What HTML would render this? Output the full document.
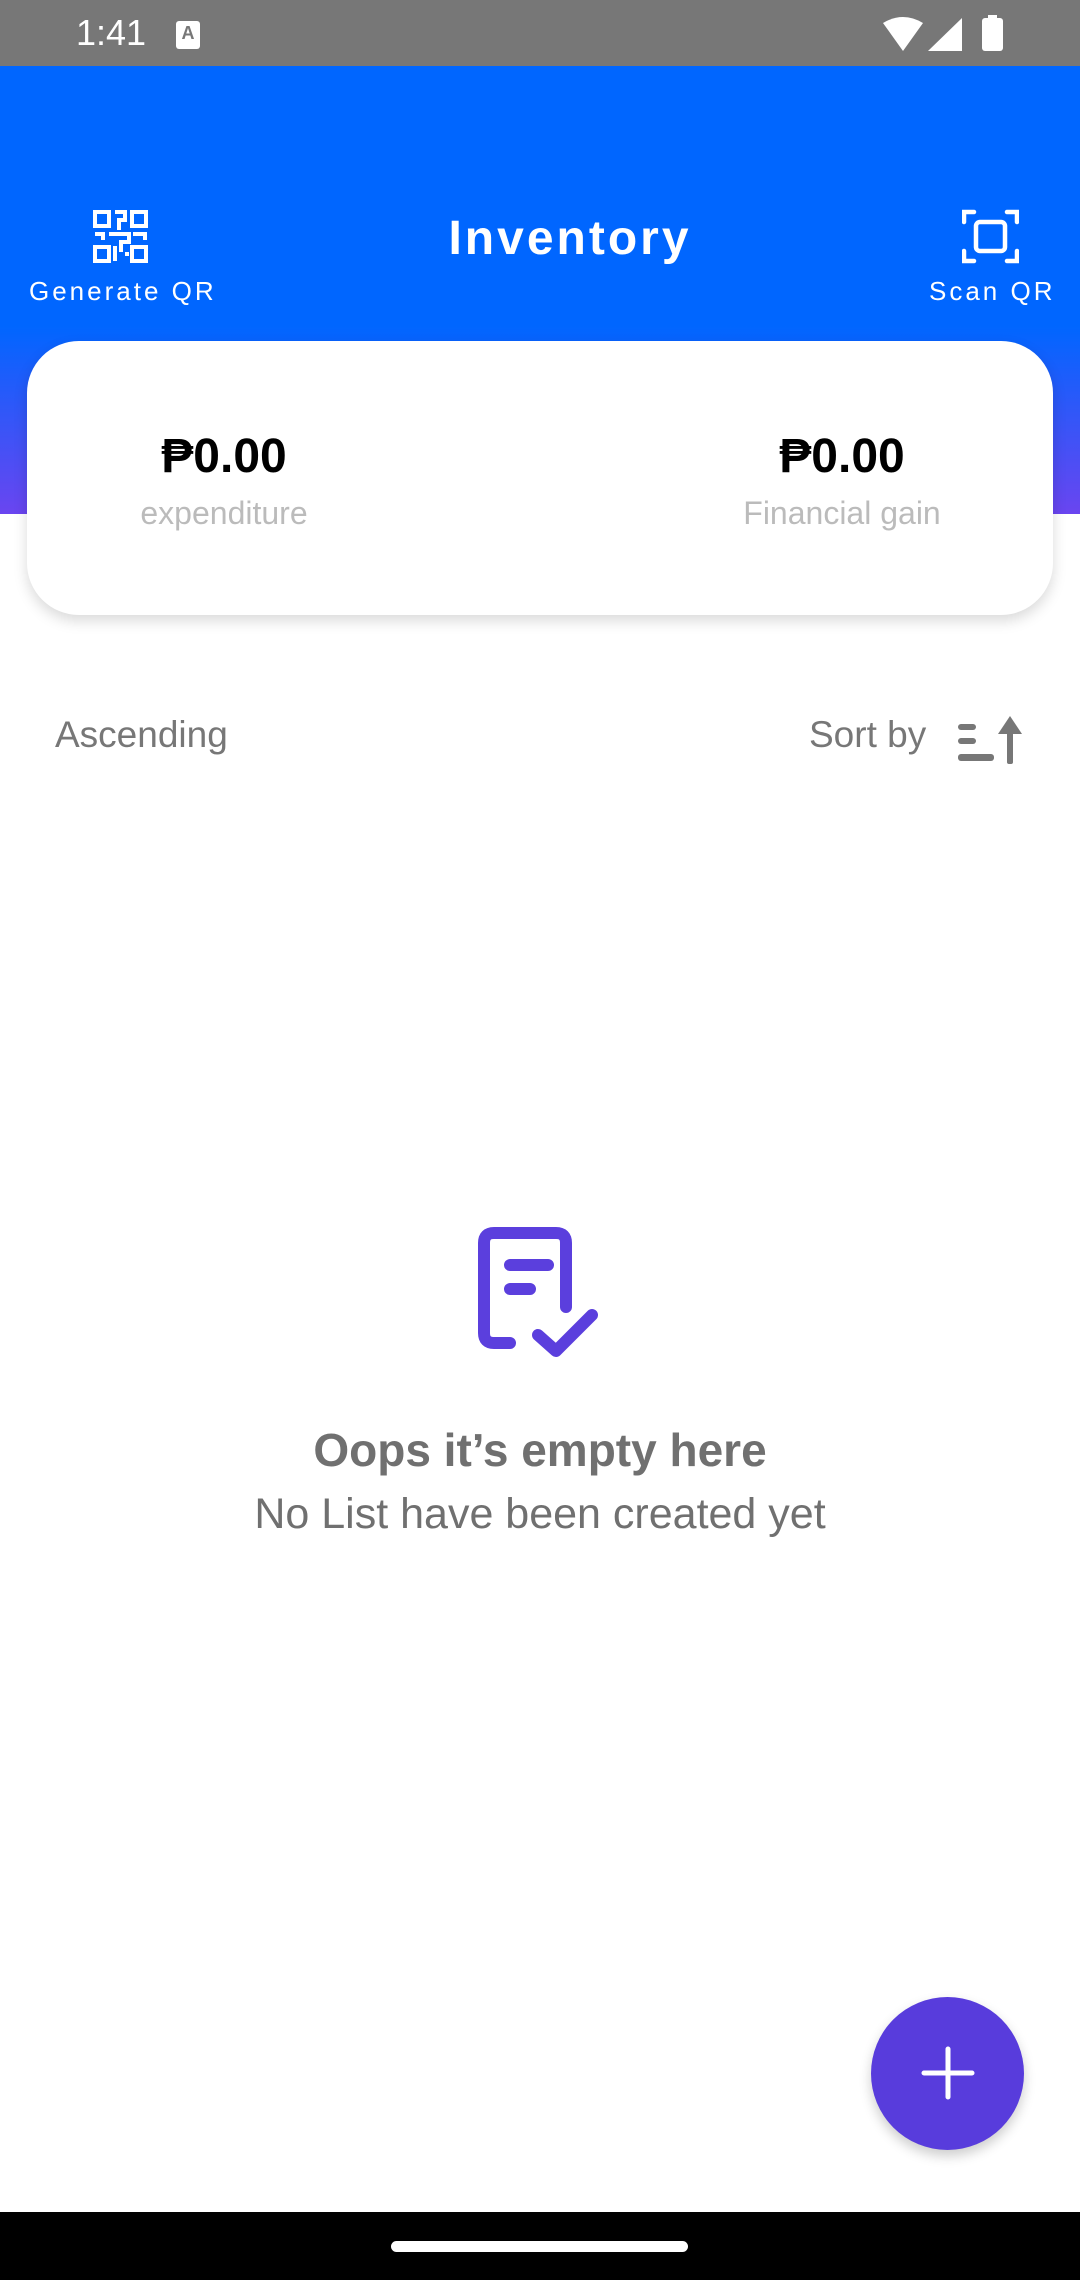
<!DOCTYPE html>
<html><head><meta charset="utf-8"><style>
*{margin:0;padding:0;box-sizing:border-box}
html,body{width:1080px;height:2280px;overflow:hidden;background:#fff;font-family:"Liberation Sans",sans-serif;position:relative}
.abs{position:absolute}
#status{left:0;top:0;width:1080px;height:66px;background:#777}
#head{left:0;top:66px;width:1080px;height:448px;background:linear-gradient(180deg,#0066ff 0%,#0066ff 58%,#6a45f0 100%)}
.lbl{color:#fff;font-size:26px;letter-spacing:3px;white-space:nowrap}
#card{left:27px;top:341px;width:1026px;height:274px;background:#fff;border-radius:52px;box-shadow:0 6px 14px rgba(0,0,0,.15)}
.amt{font-weight:bold;font-size:48px;color:#000;width:400px;text-align:center}
.sub{font-size:32px;color:#bbb;width:400px;text-align:center}
</style></head><body>
<div id="status" class="abs"></div>
<div class="abs" style="left:76px;top:12px;color:#fff;font-size:36px">1:41</div>
<div class="abs" style="left:176px;top:21px;width:24px;height:28px;background:#fff;border-radius:3px;color:#777;font-size:18px;font-weight:bold;text-align:center;line-height:24px">A</div>
<svg class="abs" style="left:880px;top:14px" width="130" height="40" viewBox="0 0 130 40">
<path d="M3 9 Q23 -3 43 9 L23 37 Z" fill="#fff"/>
<path d="M48 37 L82 4 L82 37 Z" fill="#fff"/>
<rect x="102" y="4" width="21" height="33" rx="3" fill="#fff"/><rect x="108" y="1" width="9" height="4" fill="#fff"/>
</svg>
<div id="head" class="abs"></div>
<svg class="abs" style="left:93px;top:210px" width="55" height="53" viewBox="0 0 55 53" fill="none" stroke="#fff" stroke-width="4">
<rect x="2" y="2" width="14" height="14"/><rect x="39" y="2" width="14" height="14"/><rect x="2" y="37" width="14" height="14"/><rect x="39" y="37" width="14" height="14"/>
<path d="M22 2h10v8h-6v10M2 24h8v6M16 24h20v8h-8v10M40 24h12v6M22 36v15M32 44h4"/>
</svg>
<div class="abs lbl" style="left:29px;top:276px">Generate QR</div>
<div class="abs" style="left:330px;top:211px;width:480px;text-align:center;color:#fff;font-weight:bold;font-size:48px;letter-spacing:3px">Inventory</div>
<svg class="abs" style="left:962px;top:208px" width="57" height="57" viewBox="0 0 57 57" fill="none" stroke="#fff" stroke-width="4.5" stroke-linecap="round">
<path d="M2 14V4h10M45 4h10v10M55 43v10H45M12 53H2V43"/>
<rect x="14" y="14" width="29" height="29" rx="4"/>
</svg>
<div class="abs lbl" style="left:929px;top:276px">Scan QR</div>
<div id="card" class="abs"></div>
<div class="abs amt" style="left:24px;top:429px">₱0.00</div>
<div class="abs sub" style="left:24px;top:495px">expenditure</div>
<div class="abs amt" style="left:642px;top:429px">₱0.00</div>
<div class="abs sub" style="left:642px;top:495px">Financial gain</div>
<div class="abs" style="left:55px;top:714px;font-size:37px;color:#777">Ascending</div>
<div class="abs" style="left:809px;top:714px;font-size:37px;color:#777">Sort by</div>
<svg class="abs" style="left:956px;top:716px" width="72" height="50" viewBox="0 0 72 50" fill="#777">
<rect x="2" y="8" width="18" height="6" rx="3"/><rect x="2" y="22" width="18" height="6" rx="3"/><rect x="2" y="38" width="36" height="7" rx="3"/>
<rect x="51" y="10" width="6" height="38" rx="2"/><path d="M54 0 L66 18 L42 18 Z"/>
</svg>
<svg class="abs" style="left:476px;top:1225px" width="130" height="135" viewBox="0 0 130 135" fill="none" stroke="#5b3fdd" stroke-width="12" stroke-linecap="round" stroke-linejoin="round">
<path d="M34 118H18Q8 118 8 108V18Q8 8 18 8H80Q90 8 90 18V82"/>
<path d="M34 40h38M34 64h20"/>
<path d="M62 110 L80 126 L116 90"/>
</svg>
<div class="abs" style="left:0;top:1423px;width:1080px;text-align:center;font-weight:bold;font-size:46px;color:#707070">Oops it’s empty here</div>
<div class="abs" style="left:0;top:1490px;width:1080px;text-align:center;font-size:43px;color:#707070">No List have been created yet</div>
<div class="abs" style="left:871px;top:1997px;width:153px;height:153px;border-radius:50%;background:#583cdc;box-shadow:0 6px 12px rgba(0,0,0,.2)"></div>
<svg class="abs" style="left:921px;top:2046px" width="54" height="54" viewBox="0 0 54 54" stroke="#fff" stroke-width="5" stroke-linecap="round"><path d="M27 3v48M3 27h48"/></svg>
<div class="abs" style="left:0;top:2212px;width:1080px;height:68px;background:#000"></div>
<div class="abs" style="left:391px;top:2241px;width:297px;height:11px;border-radius:6px;background:#fff"></div>
</body></html>
